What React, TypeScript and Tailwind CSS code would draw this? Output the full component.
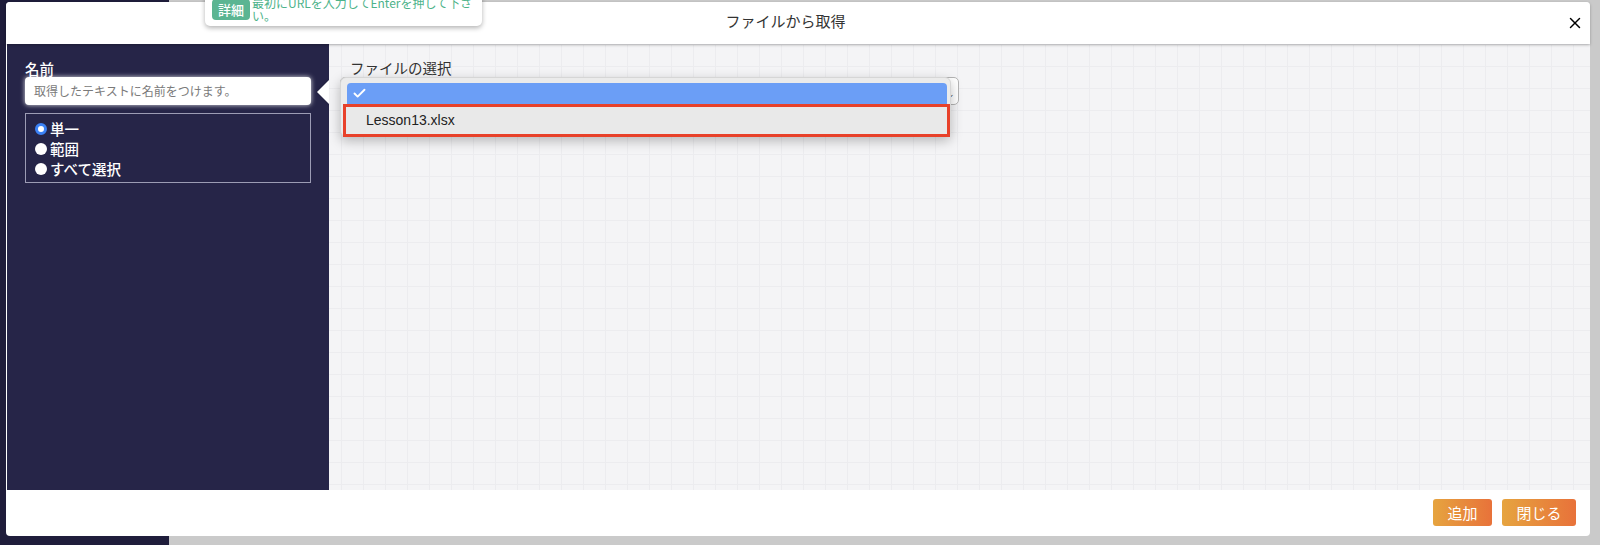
import { Check, X } from 'lucide-react';

const jp = "font-['Noto_Sans_CJK_JP',sans-serif]";

const RadioRow = ({ label, checked }: { label: string; checked?: boolean }) => (
  <label className="flex items-center h-[20px] gap-[3px]">
    {checked ? (
      <span className="w-[12px] h-[12px] rounded-full border-[3px] border-[#3b82f6] bg-white" />
    ) : (
      <span className="w-[12px] h-[12px] rounded-full bg-white" />
    )}
    <span className="text-[14.5px] font-medium text-white leading-[20px]">{label}</span>
  </label>
);

export default function App() {
  return (
    <div className={`relative w-[1600px] h-[545px] overflow-hidden flex ${jp}`}>
      {/* page behind the modal */}
      <div className="w-[169px] h-full bg-[#1f1d3b]" />
      <div className="flex-1 h-full bg-[#cacaca]" />

      {/* modal */}
      <div className="absolute left-[6px] top-[2px] w-[1584px] h-[534px] bg-white rounded-[4px] flex flex-col">
        <div className="relative z-10 h-[42px] flex items-center pb-[4px] bg-white rounded-t-[4px] shadow-[0_1px_3px_rgba(0,0,0,0.28)]">
          <div className="flex-1 text-center text-[15px] text-[#333]">ファイルから取得</div>
          <button className="w-[20px] h-[20px] mr-[5px] mt-[4px] flex items-center justify-center text-black">
            <X size={18} strokeWidth={2} />
          </button>
        </div>

        <div className="flex-1 flex">
          {/* left panel */}
          <div className="ml-[1px] w-[322px] bg-[#262548] pt-[17px] px-[18px]">
            <div className="text-[14.5px] font-medium text-white leading-[16px] h-[16px]">名前</div>
            <div className="h-[28px] bg-white rounded-[4px] shadow-[0_0_5px_rgba(255,255,255,0.85)] flex items-center px-[9px]">
              <span className="text-[12px] text-[#7a7a7a]">取得したテキストに名前をつけます。</span>
            </div>
            <div className="mt-[8px] h-[70px] border border-[#9c9cb4] pt-[5px] pl-[9px]">
              <RadioRow label="単一" checked />
              <RadioRow label="範囲" />
              <RadioRow label="すべて選択" />
            </div>
          </div>

          {/* right panel */}
          <div className="relative flex-1 bg-[#f4f4f6] bg-[linear-gradient(to_right,#ececef_1px,transparent_1px),linear-gradient(to_bottom,#ececef_1px,transparent_1px)] bg-[size:22px_22px] bg-[position:12px_0px] pt-[15px] px-[11px]">
            <div className="absolute left-[-12px] top-[36px] w-0 h-0 border-y-[12px] border-y-transparent border-r-[12px] border-r-white drop-shadow-[-1px_0_1px_rgba(0,0,0,0.15)]" />
            <div className="pl-[10px] text-[14.5px] text-[#333] leading-[18px]">ファイルの選択</div>
            <div className="relative w-[619px] h-[28px] bg-white border border-[#b4b4b4] rounded-[5px]">
              <span className="absolute right-[3px] top-[9px] text-[9px] text-[#555]">⌄</span>
              {/* open list */}
              <div className="absolute left-[-1px] top-[-1px] w-[611px] h-[60px] bg-[#ebebeb] rounded-[6px] border border-[#d6d6d6] shadow-[0_4px_12px_rgba(0,0,0,0.25)] pt-[5px]">
                <div className="ml-[6px] mr-[3px] h-[21px] bg-[#6b9ef6] rounded-t-[4px] flex items-center pl-[5px] text-white">
                  <Check size={15} strokeWidth={3} />
                </div>
                <div className="ml-[2px] h-[33px] border-[3px] border-[#e8412a] bg-[#e9e9e9] flex items-center pl-[20px]">
                  <span className="text-[14px] text-[#222] font-['Liberation_Sans','Noto_Sans_CJK_JP',sans-serif]">Lesson13.xlsx</span>
                </div>
              </div>
            </div>
          </div>
        </div>

        <div className="h-[46px] flex items-start justify-end gap-[10px] pt-[9px] pr-[14px]">
          <button className="w-[59px] h-[27px] rounded-[3px] bg-[linear-gradient(to_right,#e6a43f,#e8723a)] text-white text-[15px] leading-[27px]">追加</button>
          <button className="w-[74px] h-[27px] rounded-[3px] bg-[linear-gradient(to_right,#e6a43f,#e8723a)] text-white text-[15px] leading-[27px]">閉じる</button>
        </div>
      </div>

      {/* hint tooltip */}
      <div className="absolute z-20 left-[205px] top-[-12px] w-[277px] h-[38px] bg-white rounded-b-[5px] shadow-[0_2px_5px_rgba(0,0,0,0.3)] flex items-center gap-[2px] pl-[7px] pt-[4px]">
        <span className="h-[21px] w-[38px] text-center rounded-[4px] bg-[#5bb592] text-white text-[13px] leading-[21px] font-medium">詳細</span>
        <span className="text-[12px] leading-[13px] text-[#4db38a]">
          最初にURLを入力してEnterを押して下さ
          <br />
          い。
        </span>
      </div>
    </div>
  );
}
